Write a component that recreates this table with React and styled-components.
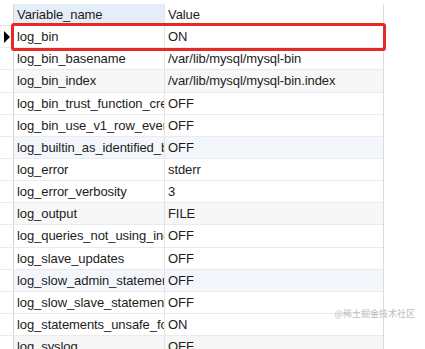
import React from 'react';
import styled, { createGlobalStyle } from 'styled-components';

const GlobalStyle = createGlobalStyle`
  html, body {
    margin: 0;
    padding: 0;
    background: #ffffff;
  }
  body {
    font-family: "Liberation Sans", Arial, "Noto Sans CJK SC", sans-serif;
    font-size: 13px;
    color: #1c1c1c;
    overflow: hidden;
  }
`;

const Page = styled.div`
  width: 425px;
  height: 349px;
  padding-top: 4px;
  box-sizing: border-box;
  position: relative;
  overflow: hidden;
`;

const Grid = styled.div`
  width: 384px;
  border-right: 1px solid #dcdcdc;
  height: 345px;
  box-sizing: border-box;
`;

const Row = styled.div`
  position: relative;
  display: grid;
  grid-template-columns: 14px 151px 1fr;
  height: 22.15px;
  box-sizing: border-box;
  border-bottom: 1px solid #ebebeb;
  background: ${p => p.$tint || '#ffffff'};
`;

const Indicator = styled.div`
  border-right: 1px solid #d6d6d6;
  background: #ffffff;
  display: flex;
  align-items: center;
  justify-content: flex-start;
  padding-left: 4px;
`;

const Cell = styled.div`
  padding-left: 3px;
  line-height: 21px;
  letter-spacing: -0.08px;
  white-space: nowrap;
  overflow: hidden;
  border-right: ${p => (p.$last ? 'none' : '1px solid #e4e4e4')};
  background: ${p => p.$bg || 'transparent'};
`;

const HeaderRow = styled(Row)`
  border-bottom: 1px solid #e2e2e2;
`;

const Arrow = styled.span`
  width: 0;
  height: 0;
  border-top: 6px solid transparent;
  border-bottom: 6px solid transparent;
  border-left: 6px solid #000000;
`;

const Highlight = styled.div`
  position: absolute;
  z-index: 2;
  left: 11px;
  right: -3px;
  top: -3px;
  bottom: -4px;
  border: 3px solid #e42a24;
  border-radius: 3px;
  pointer-events: none;
`;

const Watermark = styled.div`
  position: absolute;
  right: 10px;
  bottom: 29px;
  font-family: "Noto Sans CJK SC", sans-serif;
  font-size: 9px;
  line-height: 12px;
  color: #bdbdbd;
`;

const rows = [
  ['log_bin', 'ON'],
  ['log_bin_basename', '/var/lib/mysql/mysql-bin'],
  ['log_bin_index', '/var/lib/mysql/mysql-bin.index'],
  ['log_bin_trust_function_creators', 'OFF'],
  ['log_bin_use_v1_row_events', 'OFF'],
  ['log_builtin_as_identified_by_password', 'OFF'],
  ['log_error', 'stderr'],
  ['log_error_verbosity', '3'],
  ['log_output', 'FILE'],
  ['log_queries_not_using_indexes', 'OFF'],
  ['log_slave_updates', 'OFF'],
  ['log_slow_admin_statements', 'OFF'],
  ['log_slow_slave_statements', 'OFF'],
  ['log_statements_unsafe_for_binlog', 'ON'],
  ['log_syslog', 'OFF'],
];

const tints = { 2: '#f7f7f7', 5: '#f3f7fc', 8: '#f7f7f7', 11: '#f3f7fc', 14: '#f6f6f6' };

export default function App() {
  return (
    <>
      <GlobalStyle />
      <Page>
        <Grid>
          <HeaderRow>
            <Indicator />
            <Cell $bg="#e5edf8">Variable_name</Cell>
            <Cell $last>Value</Cell>
          </HeaderRow>
          {rows.map(([name, value], i) => (
            <Row key={name} $tint={tints[i]}>
              <Indicator>{i === 0 && <Arrow />}</Indicator>
              <Cell>{name}</Cell>
              <Cell $last>{value}</Cell>
              {i === 0 && <Highlight />}
            </Row>
          ))}
        </Grid>
        <Watermark>@稀土掘金技术社区</Watermark>
      </Page>
    </>
  );
}
